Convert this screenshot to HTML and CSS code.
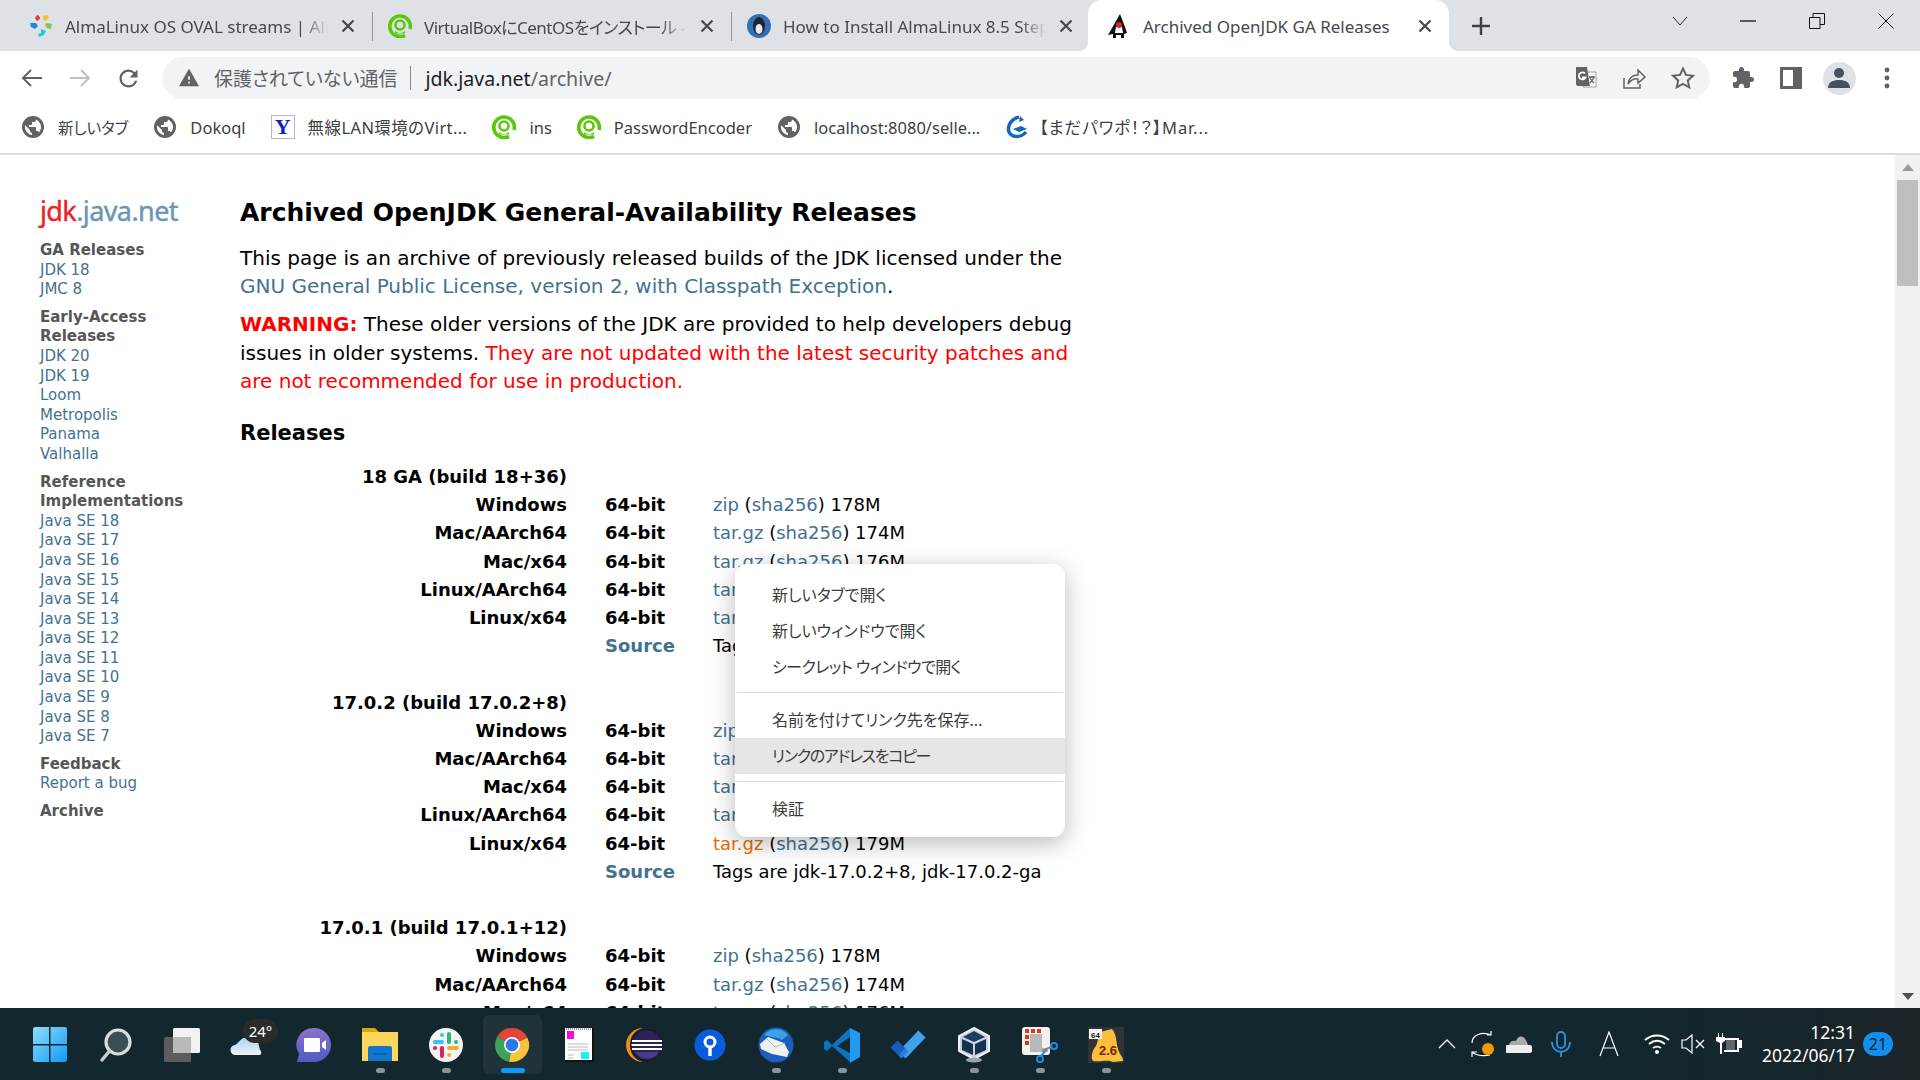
FILE: index.html
```html
<!DOCTYPE html>
<html lang="ja">
<head>
    <meta charset="UTF-8">
    <title>Archived OpenJDK GA Releases</title>
    <link rel="stylesheet" href="styles.css">
</head>
<body>
    <svg class="sprite" aria-hidden="true">
        <symbol id="globe" viewBox="0 0 24 24">
            <path fill="#5f6368" d="M12 1a11 11 0 1 0 0 22 11 11 0 0 0 0-22zm-1 19c-3.9-.5-7-3.900-7-8 0-.6.1-1.200.2-1.800L9 15v1c0 1.100.9 2 2 2v2zm6.900-2.600c-.3-.8-1-1.400-1.900-1.400h-1v-3c0-.5-.5-1-1-1H8v-2h2c.5 0 1-.5 1-1V7h2c1.100 0 2-.9 2-2v-.4c2.900 1.200 5 4 5 7.400 0 2.100-.8 4-2.100 5.400z"/>
        </symbol>
        <symbol id="ring" viewBox="0 0 24 24">
            <path fill="none" stroke="#5ac70c" stroke-width="3.600" d="M17 21.300A10.300 10.300 0 1 1 22 15"/>
            <circle cx="12" cy="11" r="4.500" fill="none" stroke="#5ac70c" stroke-width="2.600"/>
            <path fill="#5ac70c" d="M7 17c3 2.500 7 2.500 10 0v2.500H7z"/>
        </symbol>
        <symbol id="tabx" viewBox="0 0 16 16">
            <path fill="none" stroke="#45484d" stroke-width="2.200" d="M2.500 2.500l11 11M13.500 2.500l-11 11"/>
        </symbol>
    </svg>

    <div class="tabstrip">
        <div class="tab">
            <svg class="favicon" viewBox="0 0 24 24">
                <path fill="#e53935" d="M8 1c2 0 3 2 3 4L8 7 6 4z"/>
                <path fill="#fbc02d" d="M14 2l5-1 1 3-4 3-2-2z"/>
                <path fill="#8bc34a" d="M17 9l6 1-1 5-4-1-2-3z"/>
                <path fill="#26c6da" d="M12 15l5 2-2 4-5 2-1-3 3-1z"/>
                <path fill="#1e88e5" d="M1 9l6 0 2 3-3 3-4-2z"/>
            </svg>
            <span class="tab-title">AlmaLinux OS OVAL streams | AlmaLinux</span>
            <svg class="tab-close"><use href="#tabx"/></svg>
        </div>
        <div class="tab-sep"></div>
        <div class="tab">
            <svg class="favicon"><use href="#ring"/></svg>
            <span class="tab-title tab-title-ja">VirtualBoxにCentOSをインストール - Qiita</span>
            <svg class="tab-close"><use href="#tabx"/></svg>
        </div>
        <div class="tab-sep"></div>
        <div class="tab">
            <svg class="favicon" viewBox="0 0 24 24">
                <circle cx="12" cy="12" r="12" fill="#3570b5"/>
                <ellipse cx="12" cy="12" rx="6" ry="9" fill="#1c2530"/>
                <ellipse cx="12" cy="15" rx="3.500" ry="5" fill="#e8eaec"/>
            </svg>
            <span class="tab-title">How to Install AlmaLinux 8.5 Step by Step</span>
            <svg class="tab-close"><use href="#tabx"/></svg>
        </div>
        <div class="tab active">
            <svg class="favicon" viewBox="0 0 24 24">
                <path fill="#111" d="M13 0l5 13 2 6-3 1v4h-3v-3H9v3H6v-4l-5 1 4-7z"/>
                <path fill="#fff" d="M9 13h6l1 6H8z"/>
                <circle cx="12" cy="11" r="3" fill="#d9232e"/>
            </svg>
            <span class="tab-title">Archived OpenJDK GA Releases</span>
            <svg class="tab-close"><use href="#tabx"/></svg>
        </div>
        <svg class="newtab" viewBox="0 0 20 20"><path stroke="#3c4043" stroke-width="2.400" d="M10 1v18M1 10h18"/></svg>
        <div class="winctl">
            <div class="winbtn"><svg width="16" height="10" viewBox="0 0 16 10"><path fill="none" stroke="#222" d="M1 1l7 8 7-8"/></svg></div>
            <div class="winbtn"><svg width="16" height="2" viewBox="0 0 16 2"><path stroke="#111" stroke-width="1.300" d="M0 1h16"/></svg></div>
            <div class="winbtn"><svg width="16" height="16" viewBox="0 0 16 16"><path fill="none" stroke="#111" d="M.5 4.500h10.500v11H.500zM4 4.500V.500h11.500v11H11"/></svg></div>
            <div class="winbtn"><svg width="16" height="16" viewBox="0 0 16 16"><path stroke="#111" d="M.5.500l15 15M15.500.500l-15 15"/></svg></div>
        </div>
    </div>

    <div class="toolbar">
        <div class="tool"><svg width="24" height="24" viewBox="0 0 24 24"><path fill="none" stroke="#5f6368" stroke-width="2" d="M22 12H3M11 4l-8 8 8 8"/></svg></div>
        <div class="tool"><svg width="24" height="24" viewBox="0 0 24 24"><path fill="none" stroke="#bdc1c6" stroke-width="2" d="M2 12h19M13 4l8 8-8 8"/></svg></div>
        <div class="tool"><svg width="27" height="27" viewBox="0 0 24 24"><path fill="#5f6368" d="M17.650 6.350A7.958 7.958 0 0 0 12 4c-4.420 0-7.990 3.580-7.990 8s3.570 8 7.990 8c3.730 0 6.840-2.550 7.730-6h-2.080A5.990 5.990 0 0 1 12 18c-3.310 0-6-2.690-6-6s2.690-6 6-6c1.660 0 3.140.690 4.220 1.780L13 11h7V4l-2.350 2.350z"/></svg></div>
        <div class="omnibox">
            <svg class="warn" viewBox="0 0 24 24"><path fill="#5f6368" d="M1 21h22L12 2 1 21zm12-3h-2v-2h2v2zm0-4h-2v-4h2v4z"/></svg>
            <span class="insecure">保護されていない通信</span>
            <span class="omni-sep"></span>
            <span class="url"><span class="host">jdk.java.net</span>/archive/</span>
            <div class="omni-actions">
                <div class="omni-btn"><svg width="24" height="24" viewBox="0 0 24 24">
                    <path fill="#fff" stroke="#9aa0a6" d="M9 6h13v15H9z"/>
                    <path fill="#5f6368" d="M2 1h11l3 19H4a2 2 0 0 1-2-2z"/>
                    <path fill="none" stroke="#5f6368" stroke-width="1.300" d="M15 11h6M18 10v1M20 11c-1 3-3 5-4 6M16 12c1 2 3 4 4 5"/>
                    <path fill="none" stroke="#fff" stroke-width="1.800" d="M11 7.500a3.500 3.500 0 1 0 .5 4H8"/>
                </svg></div>
                <div class="omni-btn"><svg width="24" height="24" viewBox="0 0 24 24"><path fill="none" stroke="#5f6368" stroke-width="1.500" d="M2 12v10h16v-4M6 18c1-6 5-9 10-9V4l7 7-7 6v-4c-4-1-7 1-10 5z"/></svg></div>
                <div class="omni-btn"><svg width="24" height="24" viewBox="0 0 24 24"><path fill="none" stroke="#5f6368" stroke-width="2" d="M12 2.500l3 6.400 7 .8-5.200 4.700 1.400 6.900-6.200-3.500-6.200 3.500 1.400-6.900L2 9.700l7-.8z"/></svg></div>
            </div>
        </div>
        <div class="tool"><svg width="24" height="24" viewBox="0 0 24 24"><path fill="#5f6368" d="M20.500 11H19V7c0-1.100-.9-2-2-2h-4V3.500C13 2.120 11.880 1 10.500 1S8 2.120 8 3.500V5H4c-1.100 0-1.990.9-1.990 2v3.800H3.500c1.490 0 2.700 1.210 2.700 2.700s-1.210 2.700-2.700 2.700H2V20c0 1.100.9 2 2 2h3.800v-1.500c0-1.490 1.210-2.700 2.700-2.700 1.490 0 2.700 1.210 2.700 2.700V22H17c1.100 0 2-.9 2-2v-4h1.500c1.380 0 2.500-1.120 2.500-2.500S21.880 11 20.500 11z"/></svg></div>
        <div class="tool"><svg width="22" height="22" viewBox="0 0 22 22"><path fill="#5f6368" d="M0 0h22v22H0z"/><path fill="#fff" d="M3 3h10v16H3z"/></svg></div>
        <div class="tool"><div class="avatar"><svg width="24" height="24" viewBox="0 0 24 24"><circle cx="12" cy="7" r="5" fill="#474f60"/><path fill="#474f60" d="M1 22c0-6 5-8 11-8s11 2 11 8z"/></svg></div></div>
        <div class="tool"><svg width="8" height="24" viewBox="0 0 8 24"><circle cx="4" cy="4" r="2.400" fill="#5f6368"/><circle cx="4" cy="12" r="2.400" fill="#5f6368"/><circle cx="4" cy="20" r="2.400" fill="#5f6368"/></svg></div>
    </div>

    <div class="bookmarks">
        <div class="bookmark"><svg class="favicon"><use href="#globe"/></svg><span class="bookmark-small">新しいタブ</span></div>
        <div class="bookmark"><svg class="favicon"><use href="#globe"/></svg><span>Dokoql</span></div>
        <div class="bookmark"><span class="yahoo">Y</span><span class="bookmark-wide">無線LAN環境のVirt...</span></div>
        <div class="bookmark"><svg class="favicon"><use href="#ring"/></svg><span>ins</span></div>
        <div class="bookmark"><svg class="favicon"><use href="#ring"/></svg><span>PasswordEncoder</span></div>
        <div class="bookmark"><svg class="favicon"><use href="#globe"/></svg><span>localhost:8080/selle...</span></div>
        <div class="bookmark"><svg class="favicon" viewBox="0 0 24 24"><path fill="none" stroke="#1567b8" stroke-width="3.500" d="M14 2C6 4 2 11 4 17c3 6 12 6 17 0"/><path fill="#1567b8" d="M8 14l8-3 6 3-8 3zM15 1l4 4-5 2z"/></svg><span class="bookmark-tight">【まだパワポ！？】Mar...</span></div>
    </div>

    <div class="viewport">
        <div class="page">
            <div class="sidebar">
                <div class="logo"><span class="logo-jdk">jdk</span>.java.net</div>
                <div class="nav-group">
                    <b>GA Releases</b>
                    <a>JDK 18</a>
                    <a>JMC 8</a>
                </div>
                <div class="nav-group">
                    <b>Early-Access Releases</b>
                    <a>JDK 20</a>
                    <a>JDK 19</a>
                    <a>Loom</a>
                    <a>Metropolis</a>
                    <a>Panama</a>
                    <a>Valhalla</a>
                </div>
                <div class="nav-group">
                    <b>Reference Implementations</b>
                    <a>Java SE 18</a>
                    <a>Java SE 17</a>
                    <a>Java SE 16</a>
                    <a>Java SE 15</a>
                    <a>Java SE 14</a>
                    <a>Java SE 13</a>
                    <a>Java SE 12</a>
                    <a>Java SE 11</a>
                    <a>Java SE 10</a>
                    <a>Java SE 9</a>
                    <a>Java SE 8</a>
                    <a>Java SE 7</a>
                </div>
                <div class="nav-group">
                    <b>Feedback</b>
                    <a>Report a bug</a>
                </div>
                <div class="nav-group">
                    <b>Archive</b>
                </div>
            </div>
            <div class="content">
                <h1>Archived OpenJDK General-Availability Releases</h1>
                <p>This page is an archive of previously released builds of the JDK licensed under the <a>GNU General Public License, version 2, with Classpath Exception</a>.</p>
                <p><b class="warning">WARNING:</b> These older versions of the JDK are provided to help developers debug issues in older systems. <span class="warning">They are not updated with the latest security patches and are not recommended for use in production.</span></p>
                <h2>Releases</h2>
                <table class="builds">
                    <tr><th class="build-name">18 GA (build 18+36)</th><td></td><td></td></tr>
                    <tr><th>Windows</th><th class="bits">64-bit</th><td><a>zip</a> (<a>sha256</a>) 178M</td></tr>
                    <tr><th>Mac/AArch64</th><th class="bits">64-bit</th><td><a>tar.gz</a> (<a>sha256</a>) 174M</td></tr>
                    <tr><th>Mac/x64</th><th class="bits">64-bit</th><td><a>tar.gz</a> (<a>sha256</a>) 176M</td></tr>
                    <tr><th>Linux/AArch64</th><th class="bits">64-bit</th><td><a>tar.gz</a> (<a>sha256</a>) 176M</td></tr>
                    <tr><th>Linux/x64</th><th class="bits">64-bit</th><td><a>tar.gz</a> (<a>sha256</a>) 179M</td></tr>
                    <tr><th></th><th class="bits"><a>Source</a></th><td>Tags are jdk-18+36, jdk-18-ga</td></tr>
                    <tr><th>&nbsp;</th><td></td><td></td></tr>
                    <tr><th class="build-name">17.0.2 (build 17.0.2+8)</th><td></td><td></td></tr>
                    <tr><th>Windows</th><th class="bits">64-bit</th><td><a>zip</a> (<a>sha256</a>) 178M</td></tr>
                    <tr><th>Mac/AArch64</th><th class="bits">64-bit</th><td><a>tar.gz</a> (<a>sha256</a>) 174M</td></tr>
                    <tr><th>Mac/x64</th><th class="bits">64-bit</th><td><a>tar.gz</a> (<a>sha256</a>) 176M</td></tr>
                    <tr><th>Linux/AArch64</th><th class="bits">64-bit</th><td><a>tar.gz</a> (<a>sha256</a>) 176M</td></tr>
                    <tr><th>Linux/x64</th><th class="bits">64-bit</th><td><a class="hovered">tar.gz</a> (<a>sha256</a>) 179M</td></tr>
                    <tr><th></th><th class="bits"><a>Source</a></th><td>Tags are jdk-17.0.2+8, jdk-17.0.2-ga</td></tr>
                    <tr><th>&nbsp;</th><td></td><td></td></tr>
                    <tr><th class="build-name">17.0.1 (build 17.0.1+12)</th><td></td><td></td></tr>
                    <tr><th>Windows</th><th class="bits">64-bit</th><td><a>zip</a> (<a>sha256</a>) 178M</td></tr>
                    <tr><th>Mac/AArch64</th><th class="bits">64-bit</th><td><a>tar.gz</a> (<a>sha256</a>) 174M</td></tr>
                    <tr><th>Mac/x64</th><th class="bits">64-bit</th><td><a>tar.gz</a> (<a>sha256</a>) 176M</td></tr>
                </table>
            </div>
        </div>
        <div class="scrollbar">
            <div class="arrow-up"></div>
            <div class="thumb"></div>
            <div class="arrow-down"></div>
        </div>
    </div>

    <div class="taskbar">
        <div class="apps">
            <div class="app"><svg class="appicon" viewBox="0 0 36 36">
                <defs><linearGradient id="win" x1="0" y1="0" x2="1" y2="1"><stop offset="0" stop-color="#8fdcf9"/><stop offset="1" stop-color="#0f9bf7"/></linearGradient></defs>
                <path fill="url(#win)" d="M1 2q0-2 2-2h14v17H1zM18.500 0H33q2 0 2 2v15H18.500zM1 18.500h16V35H3q-2 0-2-2zM18.500 18.500H35V33q0 2-2 2H18.500z"/>
            </svg></div>
            <div class="app"><svg class="appicon" viewBox="0 0 36 36">
                <circle cx="20" cy="15" r="12" fill="#3c4d53" stroke="#d9dfe0" stroke-width="3.200"/>
                <path stroke="#c9cfd0" stroke-width="3.400" stroke-linecap="round" d="M11.500 24L4 33"/>
            </svg></div>
            <div class="app"><svg class="appicon" viewBox="0 0 36 36">
                <rect x="9" y="1" width="27" height="25" rx="1.500" fill="#f2f2f2"/>
                <rect y="10" width="27" height="25" rx="1.500" fill="#5c5c5c"/>
                <rect x="9" y="10" width="18" height="16" fill="#b9b9b9"/>
            </svg></div>
            <div class="app">
                <svg class="appicon" viewBox="0 0 36 36">
                    <defs><linearGradient id="cloud" x1="0" y1="0" x2="0" y2="1"><stop offset="0" stop-color="#a9d2f2"/><stop offset="1" stop-color="#eef3f7"/></linearGradient></defs>
                    <path fill="url(#cloud)" d="M6 28a5 5 0 0 1-1-10c2-1 4-4 8-7h14l3 12a3 3 0 0 1 0 5z"/>
                </svg>
                <span class="temp">24°</span>
            </div>
            <div class="app"><svg class="appicon" viewBox="0 0 36 36">
                <defs><linearGradient id="chat" x1="0" y1="0" x2="0" y2="1"><stop offset="0" stop-color="#8d72c9"/><stop offset="1" stop-color="#4f5bc4"/></linearGradient></defs>
                <path fill="url(#chat)" d="M18 1a17 17 0 0 1 0 34H1l2-8A17 17 0 0 1 18 1z"/>
                <path fill="#fff" d="M9 11h14a1 1 0 0 1 1 1v12a1 1 0 0 1-1 1H9a1 1 0 0 1-1-1V12a1 1 0 0 1 1-1zM26 16l4-3v10l-4-3z"/>
            </svg></div>
            <div class="app dot"><svg class="appicon" viewBox="0 0 36 36">
                <path fill="#dfa209" d="M0 1h13l4 4h19v6H0z"/>
                <path fill="#ffd65c" d="M0 5h36v29H0z"/>
                <path fill="#0f77d0" d="M6 21q0-2 2-2h20q2 0 2 2v13H6z"/>
                <path stroke="#0b5aa8" stroke-width="1.500" d="M11 27h14"/>
            </svg></div>
            <div class="app dot"><svg class="appicon" viewBox="0 0 36 36">
                <circle cx="18" cy="18" r="17" fill="#f4f4f4"/>
                <path stroke="#36c5f0" stroke-width="4" stroke-linecap="round" d="M7 15h7M14 8v.1"/>
                <path stroke="#2eb67d" stroke-width="4" stroke-linecap="round" d="M21 7v8M28 15h.1"/>
                <path stroke="#ecb22e" stroke-width="4" stroke-linecap="round" d="M21 21h8M21 28h.1"/>
                <path stroke="#e01e5a" stroke-width="4" stroke-linecap="round" d="M14 21v8M7 21h.1"/>
            </svg></div>
            <div class="app active-app">
                <svg class="appicon" viewBox="0 0 36 36">
                    <path fill="#e33b2e" d="M18 18L3.300 9.500A17 17 0 0 1 33.400 10.800z"/>
                    <path fill="#fbc02d" d="M18 18l15.400-7.200A17 17 0 0 1 15 34.700z"/>
                    <path fill="#2e9e4f" d="M18 18l-3 16.700A17 17 0 0 1 3.300 9.500z"/>
                    <circle cx="18" cy="18" r="8" fill="#fff"/>
                    <circle cx="18" cy="18" r="6.300" fill="#1a73e8"/>
                </svg>
            </div>
            <div class="app"><svg class="appicon" viewBox="0 0 36 36">
                <path fill="#111" d="M5 1h29v34H5z"/>
                <path fill="#fff" d="M5 1h27v32H5z"/>
                <rect x="7" y="4" width="7" height="8" fill="#f40cd8"/>
                <path stroke="#bbb" d="M8 17h20M8 20h20M8 23h20M8 28h6M8 31h6"/>
                <rect x="21" y="25" width="8" height="7" fill="#1cf2f2"/>
                <path stroke="#333" stroke-dasharray="1 1" d="M6 2h26"/>
            </svg></div>
            <div class="app"><svg class="appicon" viewBox="0 0 36 36">
                <path fill="#f28d16" d="M17 1a17 17 0 0 0 0 34c-8-2-13-8-13-17S9 3 17 1z"/>
                <circle cx="21" cy="18" r="15.500" fill="#2c2255" stroke="#111" stroke-width=".8"/>
                <path stroke="#fff" stroke-width="1.800" d="M6 14h30M5.500 18h31M6 22h30"/>
                <path fill="#473c86" d="M9 25h24a14 14 0 0 1-24 0z"/>
            </svg></div>
            <div class="app"><svg class="appicon" viewBox="0 0 36 36">
                <circle cx="18" cy="18" r="15.500" fill="#0b5cdc"/>
                <circle cx="18" cy="15" r="5" fill="none" stroke="#fff" stroke-width="3"/>
                <path stroke="#fff" stroke-width="3.500" d="M18 20v9"/>
            </svg></div>
            <div class="app dot"><svg class="appicon" viewBox="0 0 36 36">
                <circle cx="18" cy="18" r="17.500" fill="#1c5fb8"/>
                <path fill="#3da2e4" d="M6 8c6-7 17-8 24 0l-6 5c-5-3-11-3-18-5z"/>
                <path fill="#f0f0f0" d="M2 17l8-7 16 6 5 9-2 5-15-3-11-5z"/>
                <path fill="none" stroke="#b5bcc7" d="M9 12l8 8 10-4"/>
            </svg></div>
            <div class="app dot"><svg class="appicon" viewBox="0 0 36 36">
                <path fill="#0d74c4" d="M26 1L8 18 3 13l-3 2v7l3 2 5-5 18 16v-9L13 19l13-9z"/>
                <path fill="#1f9cf0" d="M26 1l10 5v24l-10 6z"/>
            </svg></div>
            <div class="app"><svg class="appicon" viewBox="0 0 36 36">
                <path fill="none" stroke="#41a2ec" stroke-width="10" d="M12 28L32 7"/>
                <path fill="none" stroke="#185abd" stroke-width="10" d="M4 17l8 8"/>
                <path fill="none" stroke="#2b7cd3" stroke-width="10" d="M12 25l3 3"/>
            </svg></div>
            <div class="app dot"><svg class="appicon" viewBox="0 0 36 36">
                <path fill="#c9d2dc" stroke="#eef2f5" stroke-width="2" d="M18 1l15 8v15l-15 8-15-8V9z"/>
                <path fill="#1f3d63" d="M18 4l11 6-11 5-11-5z"/>
                <path fill="#16304f" d="M6 12l11 5v11L6 23zM30 12l-11 5v11l11-5z"/>
                <ellipse cx="18" cy="33" rx="8" ry="2.500" fill="#9aa4ad"/>
            </svg></div>
            <div class="app dot"><svg class="appicon" viewBox="0 0 36 36">
                <rect x="0" y="0" width="28" height="28" rx="3" fill="#f2f2f2"/>
                <path fill="#dd3d14" d="M3 2h4v4H3zM9 2h4v4H9zM15 2h4v4h-4zM3 8h4v4H3zM3 14h4v4H3z"/>
                <path fill="#b9b9b9" d="M8 7h12v14h6v4H8z"/>
                <circle cx="32" cy="19" r="3" fill="none" stroke="#1a8fe0" stroke-width="2"/>
                <circle cx="18" cy="32" r="3" fill="none" stroke="#1a8fe0" stroke-width="2"/>
                <path stroke="#1a8fe0" stroke-width="2" d="M19 29l6-7"/>
                <path stroke="#888" stroke-width="2" d="M20 24l9-4"/>
            </svg></div>
            <div class="app dot"><svg class="appicon" viewBox="0 0 36 36">
                <rect width="36" height="36" fill="#303437"/>
                <path fill="#fbbf3c" d="M12 5l12-3c5 6 4 13 6 20 1 5 6 9 5 12l-10 1c-5-3-12 0-20-1-3-4 0-12 3-15 2-4 2-10 4-14z"/>
                <rect x="1" y="2" width="13" height="10" fill="#f5f5f5"/>
                <text x="7.500" y="10.500" class="hw-bits">64</text>
                <text x="20" y="28" class="hw-ver">2.6</text>
            </svg></div>
        </div>
        <div class="tray">
            <svg class="tray-chevron" width="18" height="10" viewBox="0 0 18 10"><path fill="none" stroke="#fff" stroke-width="1.300" d="M1 9l8-8 8 8"/></svg>
            <svg class="tray-sync" width="26" height="26" viewBox="0 0 26 26"><path fill="none" stroke="#fff" stroke-width="1.200" d="M2 12C2 4 12 0 21 4M21 0v4h-4M20 24C10 26 4 23 2 21M2 26v-5h5"/><circle cx="18" cy="18" r="6" fill="#f39a00"/></svg>
            <svg class="tray-cloud" width="26" height="20" viewBox="0 0 26 20"><path fill="#eee" d="M2 19a4 4 0 0 1 0-8h20a4 4 0 0 1 2 8z"/><path fill="#aaa" d="M3 11c1-4 4-5 7-4 2-6 9-7 12 4z"/></svg>
            <svg class="tray-mic" width="20" height="26" viewBox="0 0 20 26"><g fill="none" stroke="#2d93dd" stroke-width="1.800"><rect x="6" y="1" width="8" height="16" rx="4"/><path d="M1 11c0 13 18 13 18 0M10 21v5"/></g></svg>
            <svg class="tray-ime" width="20" height="26" viewBox="0 0 20 26"><path fill="none" stroke="#fff" stroke-width="1.200" d="M1 25L10 1l9 24M4 17h12"/></svg>
            <svg class="tray-wifi" width="26" height="20" viewBox="0 0 26 20"><g fill="none" stroke="#fff" stroke-width="1.800"><path d="M1 6c7-6 17-6 24 0M5 10c5-4 11-4 16 0M9 14c3-2 5-2 8 0"/></g><circle cx="13" cy="18" r="2" fill="#fff"/></svg>
            <svg class="tray-sound" width="24" height="20" viewBox="0 0 24 20"><path fill="none" stroke="#fff" stroke-width="1.200" d="M1 6h4l6-5v18l-6-5H1zM15 6l8 8M23 6l-8 8"/></svg>
            <svg class="tray-power" width="26" height="22" viewBox="0 0 26 22"><path fill="#fff" d="M2 0h1v4H2zM6 0h1v4H6zM0 4h9v4l-3 2v11H4V10L0 8zM8 5h15v2h3v8h-3v4H8v-2h13V7H8z"/><path fill="#fff" d="M10 7h9v10h-9z" opacity=".3"/></svg>
            <div class="clock">
                <span>12:31</span>
                <span>2022/06/17</span>
            </div>
            <span class="notify">21</span>
        </div>
    </div>

    <div class="menu">
        <div class="menu-item">新しいタブで開く</div>
        <div class="menu-item">新しいウィンドウで開く</div>
        <div class="menu-item tight">シークレット ウィンドウで開く</div>
        <div class="menu-sep"></div>
        <div class="menu-item">名前を付けてリンク先を保存...</div>
        <div class="menu-item selected">リンクのアドレスをコピー</div>
        <div class="menu-sep"></div>
        <div class="menu-item">検証</div>
    </div>
</body>
</html>
```

FILE: styles.css
```css
* {
    box-sizing: border-box;
}
body {
    margin: 0;
    height: 100vh;
    display: flex;
    flex-direction: column;
    overflow: hidden;
    background-color: #fff;
    font-family: "Noto Sans", "Noto Sans CJK JP", sans-serif;
    font-feature-settings: "palt";
}
.sprite {
    position: absolute;
    width: 0;
    height: 0;
}
.favicon {
    width: 24px;
    height: 24px;
    flex: none;
}

/* tabs */
.tabstrip {
    height: 51px;
    flex: none;
    display: flex;
    align-items: center;
    padding-left: 14px;
    background-color: #dee1e6;
}
.tab {
    width: 358px;
    height: 51px;
    flex: none;
    display: flex;
    align-items: center;
    gap: 12px;
    padding: 1px 16px 0 15px;
    color: #45484d;
    font-size: 17px;
}
.tab-title {
    flex: 1;
    overflow: hidden;
    white-space: nowrap;
    -webkit-mask-image: linear-gradient(to right, #000 90%, transparent);
    mask-image: linear-gradient(to right, #000 90%, transparent);
}
.tab-title-ja {
    letter-spacing: -.5px;
}
.tab-close {
    width: 16px;
    height: 16px;
    flex: none;
}
.tab-sep {
    width: 1px;
    height: 29px;
    flex: none;
    margin-top: 2px;
    background-color: #8f9296;
}
.tab.active {
    position: relative;
    width: 361px;
    margin-left: -2px;
    padding: 1px 16px 0 19px;
    background-color: #fff;
    border-radius: 14px 14px 0 0;
}
.tab.active .tab-title {
    -webkit-mask-image: none;
    mask-image: none;
}
.tab.active::before,
.tab.active::after {
    content: "";
    position: absolute;
    bottom: 0;
    width: 10px;
    height: 10px;
}
.tab.active::before {
    left: -10px;
    background: radial-gradient(circle at 0 0, transparent 10px, #fff 10.500px);
}
.tab.active::after {
    right: -10px;
    background: radial-gradient(circle at 100% 0, transparent 10px, #fff 10.500px);
}
.newtab {
    width: 20px;
    height: 20px;
    margin: 1px 0 0 22px;
}
.winctl {
    display: flex;
    margin-left: auto;
    align-self: flex-start;
}
.winbtn {
    width: 68.670px;
    height: 42px;
    display: flex;
    align-items: center;
    justify-content: center;
}

/* address bar */
.toolbar {
    height: 52px;
    flex: none;
    display: flex;
    align-items: center;
    padding: 2px 9px 0 8px;
    background-color: #fff;
}
.tool {
    width: 48px;
    height: 48px;
    flex: none;
    display: flex;
    align-items: center;
    justify-content: center;
}
.omnibox {
    flex: 1;
    height: 42px;
    display: flex;
    align-items: center;
    margin-left: 10px;
    margin-right: 9px;
    padding-left: 16px;
    border-radius: 21px;
    background-color: #f1f3f4;
    white-space: nowrap;
}
.warn {
    width: 22px;
    height: 22px;
    flex: none;
}
.insecure {
    margin-left: 14px;
    color: #5f6368;
    font-size: 19px;
}
.omni-sep {
    width: 1px;
    height: 24px;
    margin: 0 14px 0 13px;
    background-color: #80868b;
}
.url {
    color: #5f6368;
    font-size: 19.600px;
}
.host {
    color: #202124;
}
.omni-actions {
    display: flex;
    margin-left: auto;
    padding-right: 3px;
}
.omni-btn {
    width: 48.500px;
    display: flex;
    justify-content: center;
}
.avatar {
    width: 33px;
    height: 33px;
    display: flex;
    align-items: center;
    justify-content: center;
    border-radius: 50%;
    background-color: #dee1e6;
}

/* bookmarks */
.bookmarks {
    height: 52px;
    flex: none;
    display: flex;
    align-items: center;
    padding: 0 0 2px 21px;
    border-bottom: 2px solid #dcdcdc;
    color: #3c4043;
    font-size: 16.500px;
    white-space: nowrap;
}
.bookmark {
    display: flex;
    align-items: center;
    gap: 13px;
    margin-right: 25px;
}
.bookmark-small {
    font-size: 15.500px;
}
.bookmark-wide {
    letter-spacing: .4px;
}
.bookmark-tight {
    margin-left: -3px;
    letter-spacing: .9px;
}
.yahoo {
    width: 24px;
    height: 24px;
    flex: none;
    display: flex;
    align-items: center;
    justify-content: center;
    border: 1px solid #a8b4f0;
    color: #0f1fc4;
    font: bold 22px "Liberation Serif", serif;
}

/* page */
.viewport {
    flex: 1;
    min-height: 0;
    display: flex;
}
.page {
    flex: 1;
    display: flex;
    overflow: hidden;
    font-family: "DejaVu Sans", sans-serif;
    font-feature-settings: normal;
    font-size: 20px;
    line-height: 28.200px;
    color: #000;
}
.page a {
    color: #437291;
}
.sidebar {
    width: 240px;
    flex: none;
    padding: 38px 40px 0;
    font-size: 15px;
    line-height: 19.600px;
}
.logo {
    margin-bottom: 12px;
    color: #6a96b4;
    font: 27px/36px "Noto Sans", sans-serif;
    letter-spacing: -.6px;
    white-space: nowrap;
    -webkit-text-stroke: .4px;
}
.logo-jdk {
    color: #e8212b;
}
.nav-group {
    margin-bottom: 8px;
}
.nav-group b {
    display: block;
    color: #565656;
}
.nav-group a {
    display: block;
}
.content {
    flex: none;
    width: 850px;
    padding-top: 39px;
}
h1 {
    margin: 0 0 12px;
    font-size: 25px;
    line-height: 38px;
}
p {
    margin: 0 0 10px;
}
.warning {
    color: #f00;
}
h2 {
    margin: 24px 0 16px;
    font-size: 21px;
    line-height: 28px;
}
.builds {
    border-collapse: collapse;
    font-size: 18px;
}
.builds th,
.builds td {
    padding: 0;
    height: 28.200px;
    white-space: nowrap;
}
.builds th {
    width: 327px;
    text-align: right;
    font-weight: bold;
}
.builds .bits {
    width: 146px;
    padding-left: 38px;
    text-align: left;
}
.builds .hovered {
    color: #e76f00;
}

/* scrollbar */
.scrollbar {
    width: 25px;
    flex: none;
    display: flex;
    flex-direction: column;
    align-items: center;
    padding-top: 9px;
    background-color: #f1f1f1;
}
.arrow-up {
    width: 0;
    height: 0;
    border: 6px solid transparent;
    border-top: 0;
    border-bottom: 7px solid #9a9a9a;
}
.thumb {
    width: 21px;
    height: 106px;
    margin-top: 9px;
    background-color: #bfbfbf;
}
.arrow-down {
    width: 0;
    height: 0;
    margin-top: auto;
    margin-bottom: 8px;
    border: 6px solid transparent;
    border-bottom: 0;
    border-top: 7px solid #505050;
}

/* windows taskbar */
.taskbar {
    height: 72px;
    flex: none;
    display: flex;
    align-items: center;
    padding-left: 17px;
    background: linear-gradient(to right, #13272f 85%, #1a2528);
    color: #fff;
}
.apps {
    display: flex;
}
.app {
    position: relative;
    width: 66px;
    height: 72px;
    display: flex;
    align-items: center;
    justify-content: center;
}
.appicon {
    width: 36px;
    height: 36px;
    margin-top: 2px;
}
.app.dot::after {
    content: "";
    position: absolute;
    left: 29px;
    bottom: 7px;
    width: 9px;
    height: 5px;
    border-radius: 3px;
    background-color: #8b9497;
}
.active-app::before {
    content: "";
    position: absolute;
    left: 4px;
    top: 7px;
    width: 59px;
    height: 59px;
    border-radius: 6px;
    background-color: rgba(255, 255, 255, .06);
}
.active-app::after {
    content: "";
    position: absolute;
    left: 22px;
    bottom: 7px;
    width: 24px;
    height: 5px;
    border-radius: 3px;
    background-color: #0f9bf7;
}
.temp {
    position: absolute;
    left: 28px;
    top: 11px;
    width: 35px;
    height: 24px;
    border-radius: 12px;
    background-color: #2b2b2b;
    color: #fff;
    font-size: 15px;
    line-height: 24px;
    text-align: center;
}
.hw-bits {
    fill: #222;
    font: bold 8px "Liberation Sans", sans-serif;
    text-anchor: middle;
}
.hw-ver {
    fill: #7c1d0c;
    font: bold 13px "Liberation Sans", sans-serif;
    text-anchor: middle;
}
.tray {
    display: flex;
    align-items: center;
    margin-left: auto;
    padding-right: 27px;
}
.tray-sync {
    margin-left: 14px;
}
.tray-cloud {
    margin-left: 10px;
}
.tray-mic {
    margin-left: 19px;
}
.tray-ime {
    margin-left: 28px;
}
.tray-wifi {
    margin-left: 25px;
}
.tray-sound {
    margin-left: 11px;
}
.tray-power {
    margin-left: 11px;
}
.clock {
    display: flex;
    flex-direction: column;
    align-items: flex-end;
    width: 92px;
    margin-left: 21px;
    font-size: 17.500px;
    line-height: 23px;
    white-space: nowrap;
}
.notify {
    width: 30px;
    height: 24px;
    margin-left: 8px;
    border-radius: 12px;
    background-color: #0f8ff0;
    color: #0a1a22;
    font-size: 16px;
    line-height: 24px;
    text-align: center;
}

/* context menu */
.menu {
    position: absolute;
    left: 735px;
    top: 564px;
    width: 330px;
    height: 273px;
    padding-top: 13px;
    border-radius: 12px;
    background-color: #fff;
    box-shadow: 0 6px 24px rgba(0, 0, 0, .28);
    color: #3c3c3c;
    font-size: 16px;
}
.menu-item {
    height: 36px;
    padding-left: 37px;
    line-height: 36px;
    white-space: nowrap;
}
.menu-item.tight {
    letter-spacing: -.6px;
}
.menu-item.selected {
    background-color: #e6e6e6;
    letter-spacing: -1.300px;
}
.menu-sep {
    height: 1px;
    margin: 7px 2px 9px;
    background-color: #dcdce0;
}
```
